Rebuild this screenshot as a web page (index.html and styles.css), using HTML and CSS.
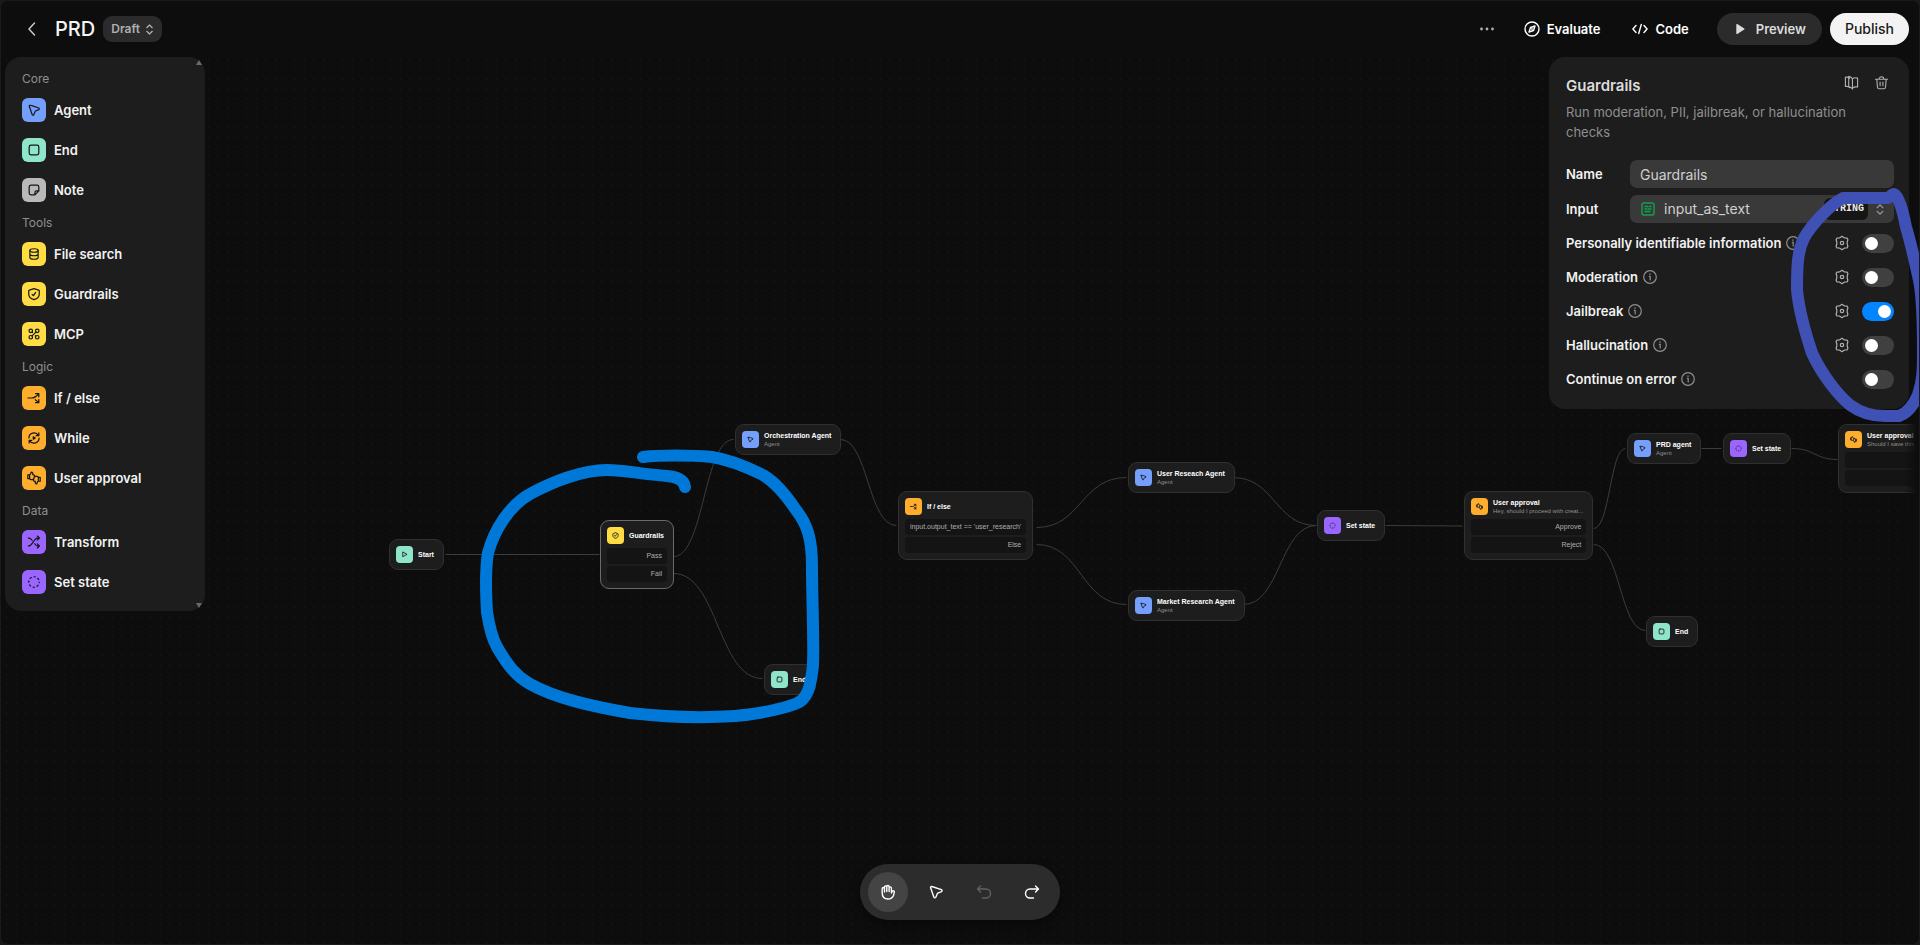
FILE: index.html
```html
<!DOCTYPE html>
<html lang="en">
<head>
<meta charset="utf-8">
<title>PRD</title>
<link rel="stylesheet" href="styles.css">
</head>
<body>
<svg class="defs" aria-hidden="true">
  <symbol id="agent" viewBox="0 0 16 16"><path d="M2.600 3.700 5.900 13.200c.3.900 1.500.9 1.900.1L9.300 9.700a1 1 0 0 1 .5-.5l3.700-1.600c.8-.4.8-1.600-.1-1.900L3.900 2.500c-.8-.3-1.600.4-1.300 1.200z"/></symbol>
  <symbol id="stop" viewBox="0 0 16 16"><rect x="2.500" y="2.500" width="11" height="11" rx="2"/></symbol>
  <symbol id="start" viewBox="0 0 16 16"><path d="M4 3v10l9-5z"/></symbol>
  <symbol id="note" viewBox="0 0 16 16"><path d="M9 13.500H4.500a2 2 0 0 1-2-2v-7a2 2 0 0 1 2-2h7a2 2 0 0 1 2 2V9zM9 13.500V11a2 2 0 0 1 2-2h2.500"/></symbol>
  <symbol id="db" viewBox="0 0 16 16"><ellipse cx="8" cy="4" rx="4.700" ry="2"/><path d="M3.300 4v8c0 1.100 2.100 2 4.700 2s4.700-.9 4.700-2V4M3.300 8c0 1.100 2.100 2 4.700 2s4.700-.9 4.700-2"/></symbol>
  <symbol id="shield" viewBox="0 0 16 16"><path d="M8 1.800 13.300 3.600c.4 0 .7.400.7.800v3.800c0 3-2.500 5.200-6 6.200-3.500-1-6-3.200-6-6.200V4.400c0-.4.3-.8.700-.8zM5.900 8.500l1.500 1.400 2.500-3.700"/></symbol>
  <symbol id="mcp" viewBox="0 0 16 16"><circle cx="4.300" cy="4.300" r="2"/><circle cx="11.700" cy="4.300" r="2"/><circle cx="4.300" cy="11.700" r="2"/><circle cx="11.700" cy="11.700" r="2"/><path d="m5.800 10.200 4.400-4.400M6.300 5.200v1.100M9.700 10.800V9.700"/></symbol>
  <symbol id="branch" viewBox="0 0 16 16"><path d="M1 8h4c3.500 0 4.500-1 8-4.500M9.800 3h3.700v3.700M9.500 10l4 3.300M13.500 9.700v3.700H9.800"/></symbol>
  <symbol id="loop" viewBox="0 0 16 16"><path d="M2.200 8A5.800 5.800 0 0 1 13 5M13.500 2.200V5.300H10.500M13.800 8A5.800 5.800 0 0 1 3 11M2.500 13.800v-3.100h3"/><path class="solid" d="M7.200 6.600v2.800L9.400 8z"/></symbol>
  <symbol id="approve" viewBox="0 0 16 16"><path d="M3 4.300H.9v4.400H3M3 4.500C4.500 4 4.600 2.800 4.800 1.200c1.900 0 2.100 1.500 1.700 3 1.500-.1 2.200.4 2 1.700L8 8.300c-.3 1.200-1 1.600-2 1.600H4.200L3 8.800zM13 11.700h2.100V7.300H13M13 11.500c-1.500.5-1.600 1.700-1.800 3.300-1.900 0-2.100-1.500-1.700-3-1.500.1-2.200-.4-2-1.700M10 6.100h1.800L13 7.200v4.300M10 6.100l-1.300.3"/></symbol>
  <symbol id="shuffle" viewBox="0 0 16 16"><path d="M1.500 3.500h.7c1.500 0 2.500 1 3.600 2.500M1.500 12.500h.7C6 12.500 8 3.500 12 3.500h2M8.800 10c.9 1.500 1.900 2.500 3.200 2.500h2M11.800 1.200 14.200 3.500l-2.400 2.300M11.800 10.200l2.400 2.300-2.400 2.300"/></symbol>
  <symbol id="state" viewBox="0 0 16 16"><circle cx="8" cy="8" r="6" stroke-linecap="butt" stroke-dasharray="2.700 2.012" stroke-dashoffset="1.350"/></symbol>
  <symbol id="updown" viewBox="0 0 10 14"><path d="M2 5l3-3 3 3M2 9l3 3 3-3"/></symbol>
  <symbol id="info" viewBox="0 0 16 16"><circle cx="8" cy="8" r="6.300"/><path d="M7.300 7.300H8.200V11M8 4.800v.6"/></symbol>
  <symbol id="gear" viewBox="0 0 16 16"><path d="M6.600 2.200 8 1.300l1.400.9 1.300.8 2.500.2.700 1.600-.7 2.200v2l.7 2.200-.7 1.600-2.500.2-1.300.8-1.400.9-1.400-.9-1.300-.8-2.500-.2-.7-1.600.7-2.200V7l-.7-2.200.7-1.600 2.500-.2z"/><circle cx="8" cy="8" r="1.700"/></symbol>
</svg>

<main class="app">
  <section class="canvas" aria-label="Workflow canvas">
    <svg class="layer">
      <defs><pattern id="dots" width="9.600" height="9.600" x="6.200" y="2" patternUnits="userSpaceOnUse"><rect width="1" height="1" fill="#202020"/></pattern></defs>
      <rect y="56" width="100%" height="100%" fill="url(#dots)"/>
      <g class="edges">
        <path d="M446 554.500H599"/>
        <path d="M674 556.500C704 556.500 704 439.500 733 439.500"/>
        <path d="M674 573.500C718 573.500 718 678.500 762 678.500"/>
        <path d="M841 439.500C868 439.500 868 525.500 896 525.500"/>
        <path d="M1037 527.500C1081 527.500 1081 477.500 1126 477.500"/>
        <path d="M1037 544.500C1081 544.500 1081 604.500 1126 604.500"/>
        <path d="M1233 477.500C1275 477.500 1275 525.500 1316 525.500"/>
        <path d="M1244 604.500C1280 604.500 1280 525.500 1316 525.500"/>
        <path d="M1386 525.500 1462 526"/>
        <path d="M1594 528.500C1610 528.500 1610 448.500 1625 448.500"/>
        <path d="M1594 544.500C1620 544.500 1620 630.500 1645 630.500"/>
        <path d="M1702 448.500H1721"/>
        <path d="M1792 448.500C1815 448.500 1815 459.500 1837 459.500"/>
      </g>
    </svg>

    <article class="node" style="left:389px;top:539px"><div class="head"><span class="chip mint"><svg><use href="#start"/></svg></span><b>Start</b></div></article>
    <article class="node selected" style="left:600px;top:520px"><div class="head"><span class="chip yellow"><svg><use href="#shield"/></svg></span><b>Guardrails</b></div><p>Pass</p><p>Fail</p></article>
    <article class="node" style="left:735px;top:424px"><div class="head"><span class="chip blue"><svg><use href="#agent"/></svg></span><div><b>Orchestration Agent</b><small>Agent</small></div></div></article>
    <article class="node" style="left:764px;top:664px"><div class="head"><span class="chip mint"><svg><use href="#stop"/></svg></span><b>End</b></div></article>
    <article class="node" style="left:898px;top:491px"><div class="head"><span class="chip orange"><svg><use href="#branch"/></svg></span><b>If / else</b></div><p>input.output_text == 'user_research'</p><p>Else</p></article>
    <article class="node" style="left:1128px;top:462px"><div class="head"><span class="chip blue"><svg><use href="#agent"/></svg></span><div><b>User Reseach Agent</b><small>Agent</small></div></div></article>
    <article class="node" style="left:1128px;top:590px"><div class="head"><span class="chip blue"><svg><use href="#agent"/></svg></span><div><b>Market Research Agent</b><small>Agent</small></div></div></article>
    <article class="node" style="left:1317px;top:510px"><div class="head"><span class="chip purple"><svg><use href="#state"/></svg></span><b>Set state</b></div></article>
    <article class="node approval" style="left:1464px;top:491px"><div class="head"><span class="chip orange"><svg><use href="#approve"/></svg></span><div><b>User approval</b><small>Hey, should I proceed with creat...</small></div></div><p>Approve</p><p>Reject</p></article>
    <article class="node" style="left:1627px;top:433px"><div class="head"><span class="chip blue"><svg><use href="#agent"/></svg></span><div><b>PRD agent</b><small>Agent</small></div></div></article>
    <article class="node" style="left:1723px;top:433px"><div class="head"><span class="chip purple"><svg><use href="#state"/></svg></span><b>Set state</b></div></article>
    <article class="node approval" style="left:1838px;top:424px"><div class="head"><span class="chip orange"><svg><use href="#approve"/></svg></span><div><b>User approval</b><small>Should I save this t</small></div></div><p></p><p></p></article>
    <article class="node" style="left:1646px;top:616px"><div class="head"><span class="chip mint"><svg><use href="#stop"/></svg></span><b>End</b></div></article>
    <div class="fade"></div>
  </section>

  <header class="bar">
    <button class="icon back" aria-label="Back"><svg viewBox="0 0 16 16"><path d="M10.500 2 5 8l5.500 6"/></svg></button>
    <h1>PRD</h1>
    <button class="draft">Draft <svg><use href="#updown"/></svg></button>
    <div class="actions">
      <button class="icon more" aria-label="More"><svg viewBox="0 0 16 16"><circle cx="2.500" cy="8" r="1.400"/><circle cx="8" cy="8" r="1.400"/><circle cx="13.500" cy="8" r="1.400"/></svg></button>
      <button class="plain"><svg viewBox="0 0 16 16"><circle cx="8" cy="8" r="7"/><path d="M11 5 9.500 9.500 5 11l1.500-4.500z"/><circle cx="8" cy="8" r=".3"/></svg>Evaluate</button>
      <button class="plain"><svg viewBox="0 0 16 16"><path d="M4 4.500.9 8 4 11.500M12 4.500 15.100 8 12 11.500M9.300 3.500 6.700 12.500"/></svg>Code</button>
      <button class="pill"><svg viewBox="0 0 16 16"><path d="M4.500 3v10l8-5z"/></svg>Preview</button>
      <button class="pill publish">Publish</button>
    </div>
  </header>

  <div class="columns">
    <nav class="palette" aria-label="Nodes">
      <h2>Core</h2>
      <button><span class="tile blue"><svg><use href="#agent"/></svg></span>Agent</button>
      <button><span class="tile mint"><svg><use href="#stop"/></svg></span>End</button>
      <button><span class="tile grey"><svg><use href="#note"/></svg></span>Note</button>
      <h2>Tools</h2>
      <button><span class="tile yellow"><svg><use href="#db"/></svg></span>File search</button>
      <button><span class="tile yellow"><svg><use href="#shield"/></svg></span>Guardrails</button>
      <button><span class="tile yellow"><svg><use href="#mcp"/></svg></span>MCP</button>
      <h2>Logic</h2>
      <button><span class="tile orange"><svg><use href="#branch"/></svg></span>If / else</button>
      <button><span class="tile orange"><svg><use href="#loop"/></svg></span>While</button>
      <button><span class="tile orange"><svg><use href="#approve"/></svg></span>User approval</button>
      <h2>Data</h2>
      <button><span class="tile purple"><svg><use href="#shuffle"/></svg></span>Transform</button>
      <button><span class="tile purple"><svg><use href="#state"/></svg></span>Set state</button>
      <i class="scroll up"></i><i class="scroll down"></i>
    </nav>

    <aside class="panel">
      <div class="panel-head">
        <h2>Guardrails</h2>
        <div class="tools">
          <button class="icon" aria-label="Docs"><svg viewBox="0 0 16 16"><path d="M6 3.500C4.500 2 2 2.200 1.500 2.500v9.800c1.500-.4 3.500 0 4.500 1.200M5 1.500c0 0 3 .5 4 2.500v11c-1-1.500-2-2-3.500-2.500M5 1.500v11M9 4c1.500-1.200 4-1.200 5.500-.7v9.500c-2-.3-4 0-5.500 1"/></svg></button>
          <button class="icon" aria-label="Delete"><svg viewBox="0 0 16 16"><path d="M1.500 4.500h13M3 4.500l.7 8.500c.1 1 .8 1.700 1.800 1.700h5c1 0 1.700-.7 1.800-1.700l.7-8.500M5.500 4.500c0-3.500 5-3.500 5 0M6.500 7.500v4M9.500 7.500v4"/></svg></button>
        </div>
      </div>
      <p class="desc">Run moderation, PII, jailbreak, or hallucination checks</p>
      <div class="field"><label for="name">Name</label><input id="name" type="text" value="Guardrails"></div>
      <div class="field"><label for="source">Input</label>
        <button id="source" class="select"><svg class="var" viewBox="0 0 16 16"><rect x="2" y="2" width="12" height="12" rx="2"/><path d="M5 5.500h3M9.500 5.500H11M5 8h1.500M8 8h3M5 10.500h5"/></svg><span>input_as_text</span><code>STRING</code><svg class="ud"><use href="#updown"/></svg></button>
      </div>
      <div class="rule"><label for="pii">Personally identifiable information</label><svg class="info"><use href="#info"/></svg><button class="icon gear" aria-label="Settings"><svg><use href="#gear"/></svg></button><input id="pii" type="checkbox"></div>
      <div class="rule"><label for="mod">Moderation</label><svg class="info"><use href="#info"/></svg><button class="icon gear" aria-label="Settings"><svg><use href="#gear"/></svg></button><input id="mod" type="checkbox"></div>
      <div class="rule"><label for="jail">Jailbreak</label><svg class="info"><use href="#info"/></svg><button class="icon gear" aria-label="Settings"><svg><use href="#gear"/></svg></button><input id="jail" type="checkbox" checked></div>
      <div class="rule"><label for="hall">Hallucination</label><svg class="info"><use href="#info"/></svg><button class="icon gear" aria-label="Settings"><svg><use href="#gear"/></svg></button><input id="hall" type="checkbox"></div>
      <div class="rule"><label for="cont">Continue on error</label><svg class="info"><use href="#info"/></svg><input id="cont" type="checkbox"></div>
    </aside>
  </div>

  <div class="dock" role="toolbar">
    <button class="on" aria-label="Pan"><svg viewBox="0 0 16 16"><path d="M2.200 9V4.700a1.100 1.100 0 0 1 2.300 0V3a1.100 1.100 0 0 1 2.300 0v-.5a1.100 1.100 0 0 1 2.300 0V4a1.100 1.100 0 0 1 2.300 0v5l.8-1.500c.7-1.200 2.500-.6 2.100.7L13.500 11.500c-1 2.300-2.700 3.500-5.500 3.500-3.700 0-5.800-2.200-5.800-6zM4.500 4.500V8M6.800 3v4.500M9.100 4v3.500"/></svg></button>
    <button aria-label="Select"><svg><use href="#agent"/></svg></button>
    <button disabled aria-label="Undo"><svg viewBox="0 0 16 16"><path d="M4.500 2 1.500 5l3 3M1.800 5H10a4.500 4.500 0 0 1 0 9H6.500"/></svg></button>
    <button aria-label="Redo"><svg viewBox="0 0 16 16"><path d="m11.500 2 3 3-3 3M14.200 5H6a4.500 4.500 0 0 0 0 9h3.500"/></svg></button>
  </div>

  <svg class="layer ink" aria-hidden="true">
    <path stroke="#0078d7" d="M685 487C684 479 676 477 667 476C640 474 625 470 607 470C582 470 552 482 530 494C510 505 494 530 488 553C485 570 486 595 487 612C489 625 492 638 497 647C508 666 516 676 530 684C555 698 590 706 630 713C665 717 705 718 735 716C760 714 785 708 795 704C808 700 811 685 813 665C814 640 812 600 812 567C812 540 808 525 796 510C786 495 775 482 763 475C745 466 725 459 712 457C690 455 660 455 643 457"/>
    <path stroke="#3f51b5" d="M1888 198H1843C1830 205 1812 224 1804 238C1797 252 1797 270 1797 290C1799 310 1806 335 1812 353C1822 375 1838 395 1850 405C1862 414 1873 416 1885 416H1899C1908 413 1914 404 1918 395C1923 380 1923 370 1923 350C1923 320 1922 295 1919 280C1915 262 1910 240 1906 227C1903 212 1899 196 1894 194C1892 194 1890 197 1888 198"/>
  </svg>
</main>
</body>
</html>
```
FILE: styles.css
```css
* { box-sizing: border-box; }
body { margin: 0; background: #1a1a1a; color: #f2f2f2; font: 500 13px/20px Inter, "Liberation Sans", sans-serif; }
h1, h2, p { margin: 0; font-weight: inherit; }
button { border: 0; padding: 0; margin: 0; background: none; color: inherit; font: inherit; display: flex; align-items: center; }
svg { fill: none; stroke: currentColor; stroke-width: 1.4; stroke-linecap: round; stroke-linejoin: round; flex: none; }
.defs { position: absolute; width: 0; height: 0; }
.solid { fill: currentColor; }

.app { position: relative; height: 100vh; overflow: hidden; background: #0d0d0d; border: 1px solid #1a1a1a; border-radius: 8px; }
.canvas, .layer { position: absolute; inset: -1px; }
.layer { width: calc(100% + 2px); height: calc(100% + 2px); }
.canvas .layer { inset: 0; width: 100%; height: 100%; stroke: none; }
.canvas .edges { stroke: #3c3c3c; stroke-width: 1; fill: none; }
.ink { stroke-width: 12; pointer-events: none; }
.fade { position: absolute; top: 56px; bottom: 0; right: 0; width: 16px; background: linear-gradient(to right, transparent, #0d0d0d 80%); }

.blue { background: #759ffc; }
.mint { background: #8ee5c9; }
.grey { background: #b9b9b9; }
.yellow { background: #ffdc43; }
.orange { background: #ffad2d; }
.purple { background: #9a66ff; }

.node { position: absolute; display: grid; gap: 2px; padding: 6px; border: 1px solid #303030; border-radius: 9px; background: #1d1d1d; white-space: nowrap; font-family: "Liberation Sans", sans-serif; }
.node.selected { border-color: #6a6a6a; }
.approval { width: 129px; }
.head { display: flex; align-items: center; gap: 5px; padding-right: 3px; }
.chip { display: grid; place-items: center; width: 17px; height: 17px; border-radius: 4px; color: #1d1d1d; }
.chip svg { width: 7px; height: 7px; stroke-width: 2; }
.node b, .node small { display: block; }
.node b { font-size: 7px; line-height: 9px; font-weight: 700; color: #fff; }
.node small { font-size: 6px; line-height: 8px; color: #8f8f8f; font-weight: 400; }
.node p { height: 16px; padding: 0 5px; border-radius: 4px; background: #141414; color: #afafaf; font-size: 7px; line-height: 16px; font-weight: 400; text-align: right; }
.node p:nth-child(2) { margin-top: 2px; }

.bar { position: relative; display: flex; align-items: center; height: 56px; padding: 0 10px 0 18px; }
.icon { justify-content: center; width: 26px; height: 26px; color: #c8c8c8; }
.icon svg { width: 16px; height: 16px; }
.bar h1 { margin-left: 10px; font-size: 20px; line-height: 28px; color: #f5f5f5; }
.draft { height: 26px; gap: 5px; margin-left: 8px; padding: 0 8px; border-radius: 9px; background: #2b2b2b; color: #afafaf; font-size: 12px; font-weight: 600; }
.draft svg { width: 9px; height: 13px; }
.actions { display: flex; align-items: center; margin-left: auto; font-weight: 600; }
.more { margin-right: 24px; color: #afafaf; }
.more svg { fill: currentColor; stroke: none; }
.plain { gap: 7px; margin-right: 32px; color: #fff; }
.plain svg { width: 16px; height: 16px; }
.pill { height: 32px; gap: 9px; padding: 0 16px; border-radius: 16px; background: #2b2b2b; color: #dcdcdc; }
.pill svg { width: 14px; height: 14px; fill: currentColor; }
.plain + .pill { margin-left: -4px; }
.publish { margin-left: 8px; padding: 0 15px; background: #f3f3f3; color: #1a1a1a; font-weight: 500; font-size: 14px; }

.columns { position: relative; display: flex; justify-content: space-between; align-items: flex-start; padding: 0 10px 0 4px; }
.palette { position: relative; width: 200px; padding: 9px 17px; border-radius: 16px; background: #1d1d1d; }
.palette h2 { padding-top: 1px; font-size: 12px; line-height: 23px; color: #8f8f8f; font-weight: 400; }
.palette button { width: 100%; height: 40px; gap: 8px; font-weight: 600; }
.tile { display: grid; place-items: center; width: 24px; height: 24px; border-radius: 6px; color: #161616; }
.tile svg { width: 14px; height: 14px; }
.scroll { position: absolute; right: 3px; border: 3px solid transparent; }
.up { top: 0; border-bottom: 5px solid #6a6a6a; }
.down { bottom: 0; border-top: 5px solid #6a6a6a; }

.panel { width: 360px; padding: 12px 15px 13px 17px; border-radius: 16px; background: #1d1d1d; }
.panel-head { display: flex; justify-content: space-between; }
.panel-head h2 { padding-top: 6px; font-size: 15px; line-height: 22px; font-weight: 600; color: #dcdcdc; }
.tools { display: flex; gap: 4px; }
.tools svg { width: 15px; height: 15px; }
.icon svg { stroke-width: 1.2; }
.back svg { stroke-width: 1.5; }
.panel .icon { color: #afafaf; }
.desc { padding: 5px 20px 0 0; color: #8f8f8f; font-weight: 400; }
.field { display: flex; align-items: center; margin-top: 7px; }
.desc + .field { margin-top: 18px; }
.field label { width: 64px; }
.field label, .rule label { font-weight: 600; }
.field input, .select { flex: 1; min-width: 0; height: 28px; border: 0; border-radius: 7px; background: #393939; color: #d0d0d0; font: inherit; font-weight: 400; font-size: 14px; }
.field input { padding: 0 10px; }
.select { padding: 0 9px 0 10px; }
.select span { flex: 1; margin-left: 8px; text-align: left; }
.var { width: 16px; height: 16px; color: #0fa24b; }
.ud { width: 10px; height: 13px; color: #9a9a9a; }
.select code { height: 22px; margin-right: 7px; padding: 0 4px; border-radius: 6px; background: #161616; color: #e8e8e8; font: 700 10px/22px "Liberation Mono", monospace; }
.rule { display: flex; align-items: center; height: 34px; }
.field + .rule { margin-top: 3px; }
.info { width: 16px; height: 16px; margin-left: 4px; color: #8f8f8f; stroke-width: 1.2; }
.rule input { appearance: none; width: 32px; height: 19px; margin: 0 0 0 auto; padding: 3px; border-radius: 10px; background: #404040; display: flex; }
.rule input::before { content: ""; width: 13px; height: 13px; border-radius: 50%; background: #fff; }
.rule input:checked { background: #0285ff; justify-content: flex-end; }
.gear { margin-left: auto; }
.rule .gear + input { margin-left: 7px; }

.dock { position: absolute; left: 50%; bottom: 24px; transform: translateX(-50%); display: flex; gap: 8px; padding: 8px; border-radius: 28px; background: #2c2c2c; box-shadow: 0 4px 12px #0006; color: #fff; }
.dock button { justify-content: center; width: 40px; height: 40px; border-radius: 20px; }
.dock .on { background: #444; }
.dock button:disabled { color: #606060; }
.dock svg { width: 16px; height: 16px; }
```
